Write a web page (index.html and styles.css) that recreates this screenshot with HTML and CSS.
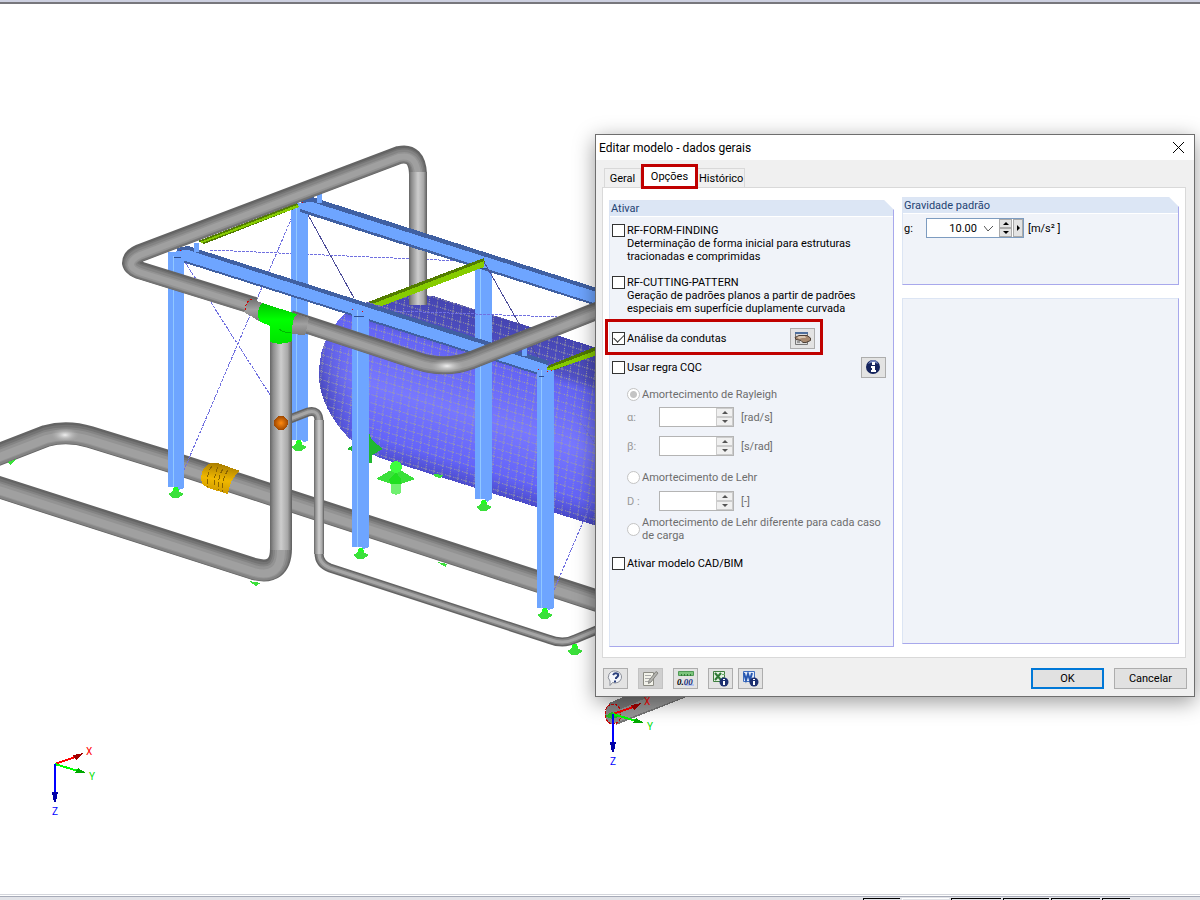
FILE: index.html
```html
<!DOCTYPE html>
<html lang="pt">
<head>
    <meta charset="UTF-8">
    <title>Editar modelo - dados gerais</title>
    <link rel="stylesheet" href="styles.css">
</head>
<body>
<div class="toolbar-edge"></div>
<main class="workspace">
    <svg class="scene" viewBox="0 4 1200 890" preserveAspectRatio="xMinYMin slice" aria-hidden="true">
        <defs>
            <path id="loop-back" d="M418 174Q417 151 399 155L140 253Q131 257 131 263Q132 268 142 271L255 306"/>
            <path id="loop-front" d="M290 319L418 361Q445 370 472 360L604 308"/>
            <path id="pipe-long" d="M-8 457L46 436Q67 430 90 437L168 461L604 603"/>
            <path id="pipe-low" d="M-8 485L254 569Q281 576 281 548V335"/>
            <path id="pipe-small" d="M290 419L308 412Q319 409 319 422V553Q319 564 330 568L548 639Q563 645 575 639L604 627"/>
            <path id="tank" d="M600 349L433 296Q385 290 350 310Q320 332 319 372Q318 400 340 428Q355 448 383 459L600 527Z"/>
            <linearGradient id="tube">
                <stop offset="0" stop-color="#666"/>
                <stop offset=".15" stop-color="#8e8e8e"/>
                <stop offset=".5" stop-color="#cdcdcd"/>
                <stop offset=".8" stop-color="#a8a8a8"/>
                <stop offset="1" stop-color="#5c5c5c"/>
            </linearGradient>
            <linearGradient id="tee" x2="0" y2="1">
                <stop offset="0" stop-color="#00c400"/>
                <stop offset=".4" stop-color="#00ff00"/>
                <stop offset="1" stop-color="#00e400"/>
            </linearGradient>
            <linearGradient id="reducer" x2="0" y2="1">
                <stop offset="0" stop-color="#6c6c6c"/>
                <stop offset=".5" stop-color="#a0a0a0"/>
                <stop offset="1" stop-color="#7c7c7c"/>
            </linearGradient>
            <linearGradient id="bellows" x1=".4" y1="0" x2=".2" y2="1">
                <stop offset="0" stop-color="#a87c00"/>
                <stop offset=".5" stop-color="#f0b800"/>
                <stop offset="1" stop-color="#c89400"/>
            </linearGradient>
            <linearGradient id="tank-fill" gradientUnits="userSpaceOnUse" x1="475" y1="307" x2="425" y2="474">
                <stop offset="0" stop-color="#4444b0"/>
                <stop offset=".22" stop-color="#5050c4"/>
                <stop offset=".28" stop-color="#6464f4"/>
                <stop offset=".6" stop-color="#7878ff"/>
                <stop offset=".88" stop-color="#6464f8"/>
                <stop offset="1" stop-color="#4a4ac8"/>
            </linearGradient>
            <linearGradient id="tank-cap" gradientUnits="userSpaceOnUse" x1="318" y1="380" x2="365" y2="368">
                <stop offset="0" stop-color="#3c3ca8" stop-opacity=".75"/>
                <stop offset="1" stop-color="#6a6aff" stop-opacity="0"/>
            </linearGradient>
            <radialGradient id="ball">
                <stop offset="0" stop-color="#ff8a10"/>
                <stop offset="1" stop-color="#a04800"/>
            </radialGradient>
            <radialGradient id="shine">
                <stop offset="0" stop-color="#f0f0f0"/>
                <stop offset="1" stop-color="#b0b0b0" stop-opacity="0"/>
            </radialGradient>
            <pattern id="mesh" width="8" height="8" patternUnits="userSpaceOnUse" patternTransform="matrix(1 .3 -.12 1 0 0)">
                <path class="mesh-line" d="M0 1H8M1 0V8"/>
            </pattern>
            <g id="support">
                <path fill="#1fff1f" d="M-2 -6H2L4 0H-4Z"/>
                <path fill="#3be03b" d="M0 -3L8 1L2 5H-3L-8 1Z"/>
            </g>
            <g id="axes">
                <path stroke="#f00" stroke-width="2" d="M0 0L20 -7"/>
                <path fill="#a00000" d="M18 -9L29 -11L21 -4Z"/>
                <path stroke="#0f0" stroke-width="2" d="M0 0L23 7"/>
                <path fill="#00a800" d="M23 4L31 9L20 9Z"/>
                <path stroke="#00f" stroke-width="2" d="M0 0V30"/>
                <path fill="#0000a8" d="M-3 28H3L1 38H-1Z"/>
                <text class="axis-name" x="31" y="-9" fill="#f00">X</text>
                <text class="axis-name" x="34" y="16" fill="#00e000">Y</text>
                <text class="axis-name" x="-3" y="51" fill="#00f">Z</text>
            </g>
        </defs>

        <!-- rear pipe run -->
        <g class="pipe pipe-large">
            <use href="#pipe-long" class="tone-1"/>
            <use href="#pipe-long" class="tone-2"/>
            <use href="#pipe-long" class="tone-3"/>
            <use href="#pipe-long" class="tone-4"/>
            <use href="#pipe-long" class="tone-5"/>
        </g>
        <ellipse cx="65" cy="435" rx="14" ry="7" fill="url(#shine)"/>
        <path fill="url(#bellows)" d="M206 466Q210 462 218 463L240 471Q230 478 228 494L208 488Q200 484 201 477Q202 470 206 466Z"/>
        <path class="ribs" d="M212 466Q206 474 208 487M218 467Q213 477 215 488M223 469Q217 478 219 490M228 470Q221 481 223 492"/>

        <!-- tank -->
        <use href="#tank" fill="url(#tank-fill)"/>
        <use href="#tank" fill="url(#tank-cap)"/>
        <use href="#tank" fill="url(#mesh)"/>

        <!-- rear frame -->
        <g class="brace">
            <path d="M295 210L184 470M185 262L299 440M210 250L484 262"/>
            <path class="dark" d="M302 204L354 298"/>
        </g>
        <rect x="409" y="172" width="18" height="133" fill="url(#tube)"/>
        <g class="column">
            <path d="M291 203H308V441L303 442L301 440H291Z"/>
            <path class="gloss" d="M296 207V440"/>
            <path d="M475 265H492V499L487 502L485 499H475Z"/>
            <path class="gloss" d="M480 268V499"/>
        </g>
        <g class="beam">
            <path class="edge" d="M301 200L312 197L600 289V307L300 212Z"/>
            <path d="M300 203L312 202L600 293V305L300 209Z"/>
            <path d="M317 193H322V203H317Z"/>
        </g>
        <g class="green-beam">
            <path class="edge" d="M198 241L297 203L299 207L204 244Z"/>
            <path d="M200 242L297 205L299 207L202 243Z"/>
            <path class="edge" d="M368 302L484 258L485 264L382 306Z"/>
            <path d="M372 304L484 261V267L382 306Z"/>
            <path class="edge" d="M545 367L600 345V353L552 371Z"/>
            <path d="M546 369L600 349V354L550 371Z"/>
        </g>
        <g class="brace">
            <path d="M395 311L557 317M555 383L598 448M554 590L600 482"/>
            <path class="dark" d="M484 262L538 357"/>
        </g>

        <!-- front frame -->
        <g class="beam">
            <path class="edge" d="M177 248L188 246L549 361L545 377L176 260Z"/>
            <path d="M176 251L188 250L548 365L545 375L176 258Z"/>
            <path d="M194 243H199V252H194ZM522 347H527V356H522Z"/>
        </g>
        <g class="column">
            <path d="M168 252H184V488L179 490L176 487H168Z"/>
            <path class="gloss" d="M173 256V487"/>
            <path d="M352 310H369V547L364 549L361 547H352Z"/>
            <path class="gloss" d="M357 310V547"/>
            <path d="M537 370H554V608L549 610L546 608H537Z"/>
            <path class="gloss" d="M541 370V608"/>
        </g>
        <path stroke="#2f4f8f" d="M174 257H181M354 316H364M539 376H544M480 268H487"/>
        <path fill="#e00000" d="M180 250h1v1h-1zM302 202h1v1h-1zM352 309h1v1h-1zM362 311h1v1h-1zM538 369h1v1h-1zM547 371h1v1h-1zM551 370h1v1h-1z"/>

        <!-- upper loop -->
        <g class="pipe pipe-medium">
            <use href="#loop-back" class="tone-1"/>
            <use href="#loop-back" class="tone-2"/>
            <use href="#loop-back" class="tone-3"/>
            <use href="#loop-back" class="tone-4"/>
            <use href="#loop-back" class="tone-5"/>
            <use href="#loop-front" class="tone-1"/>
            <use href="#loop-front" class="tone-2"/>
            <use href="#loop-front" class="tone-3"/>
            <use href="#loop-front" class="tone-4"/>
            <use href="#loop-front" class="tone-5"/>
        </g>
        <rect x="409" y="172" width="18" height="24" fill="url(#tube)"/>
        <ellipse cx="447" cy="366" rx="17" ry="7" fill="url(#shine)"/>
        <path fill="url(#reducer)" d="M249 298L262 303L259 321L244 312Z"/>
        <path fill="url(#reducer)" d="M294 313L309 318L305 335L290 334Z"/>
        <path class="weld" d="M245 310Q245 302 252 299"/>

        <!-- lower run and riser -->
        <g class="pipe pipe-large">
            <use href="#pipe-low" class="tone-1"/>
            <use href="#pipe-low" class="tone-2"/>
            <use href="#pipe-low" class="tone-3"/>
            <use href="#pipe-low" class="tone-4"/>
            <use href="#pipe-low" class="tone-5"/>
        </g>
        <rect x="270" y="340" width="22" height="210" fill="url(#tube)"/>
        <g class="pipe pipe-thin">
            <use href="#pipe-small" class="tone-1"/>
            <use href="#pipe-small" class="tone-2"/>
            <use href="#pipe-small" class="tone-3"/>
        </g>
        <rect x="314" y="420" width="10" height="134" fill="url(#tube)"/>
        <rect x="270" y="400" width="22" height="40" fill="url(#tube)"/>
        <path fill="url(#tee)" d="M262 303L297 314Q291 319 292 341Q281 346 270 342V326L259 321Q256 310 262 303Z"/>
        <path fill="none" stroke="#00b800" d="M279 329Q285 334 291 332"/>
        <circle cx="281" cy="423" r="7" fill="url(#ball)"/>

        <!-- supports -->
        <use href="#support" x="176" y="493"/>
        <use href="#support" x="299" y="446"/>
        <use href="#support" x="361" y="554"/>
        <use href="#support" x="484" y="506"/>
        <use href="#support" x="545" y="614"/>
        <use href="#support" x="575" y="650"/>
        <path fill="#20b830" d="M369 433L372 440L383 449L372 455V463H369ZM347 449L352 446V451Z"/>
        <path fill="#3be03b" d="M376 479L389 471H402L415 479L401 484H391Z"/>
        <circle cx="396" cy="467" r="6" fill="#3dff3d"/>
        <path fill="#20e020" d="M389 480L396 472L401 479V484H391Z"/>
        <path fill="#70f070" d="M391 484H401V493L396 495L391 493Z"/>
        <path fill="#3be03b" d="M434 474L443 475L440 478L435 477ZM437 562L447 564L446 567ZM7 462L16 459L11 465ZM249 581L261 583L256 586Z"/>

        <!-- pipe end under the dialog -->
        <path fill="#777" d="M609 703L640 690H700L684 698L616 725Z"/>
        <path fill="#969696" d="M614 712L660 692L684 697L618 722Z"/>
        <ellipse class="pipe-end" cx="613" cy="714" rx="8" ry="10"/>
        <path fill="#20c020" d="M605 716L612 712L622 716L612 719Z"/>

        <use href="#axes" x="55" y="764"/>
        <use href="#axes" x="613" y="714"/>
    </svg>

    <section class="dialog" role="dialog" aria-labelledby="dialog-title">
        <header class="dialog-title">
            <h1 id="dialog-title">Editar modelo - dados gerais</h1>
            <button class="close" type="button" aria-label="Fechar">
                <svg width="11" height="11" viewBox="0 0 11 11"><path d="M0 0L11 11M11 0L0 11" stroke="#000"/></svg>
            </button>
        </header>

        <nav class="tabs">
            <button class="tab" type="button">Geral</button>
            <button class="tab tab-active" type="button">Opções</button>
            <button class="tab" type="button">Histórico</button>
        </nav>

        <div class="pane">
            <section class="group group-left">
                <h2>Ativar</h2>
                <div class="group-body">
                    <label class="option">
                        <input type="checkbox">
                        <span>RF-FORM-FINDING<br>Determinação de forma inicial para estruturas<br>tracionadas e comprimidas</span>
                    </label>
                    <label class="option">
                        <input type="checkbox">
                        <span>RF-CUTTING-PATTERN<br>Geração de padrões planos a partir de padrões<br>especiais em superfície duplamente curvada</span>
                    </label>
                    <div class="option-row highlighted">
                        <label class="option"><input type="checkbox" checked><span>Análise da condutas</span></label>
                        <button class="icon-button" type="button" aria-label="Configurar">
                            <svg width="17" height="15" viewBox="0 0 17 15">
                                <path fill="#dcdcdc" stroke="#777" d="M1.500 1.500h12v12h-12z"/>
                                <path fill="#4f6f9c" d="M1 1h13v2H1z"/>
                                <path fill="#999" d="M3 10h3v2H3zM8 11h4v1H8z"/>
                                <path fill="#a88a70" stroke="#4e4036" d="M1 6.500L5 4.500H13L16.500 7V9.500L12 11.500H9L7 9.500L2 8.500Z"/>
                                <path fill="#d8c4ae" d="M3 6L6 5H11L12 7H8L5 8Z"/>
                            </svg>
                        </button>
                    </div>
                    <div class="option-row cqc">
                        <label class="option"><input type="checkbox"><span>Usar regra CQC</span></label>
                        <button class="icon-button" type="button" aria-label="Informação">
                            <svg width="17" height="17" viewBox="0 0 17 17">
                                <circle cx="8" cy="8" r="7" fill="#14235c"/>
                                <path fill="#6f80b8" d="M3 5Q5 1 8 1Q12 1 13 5Q8 2 3 5Z"/>
                                <path fill="#fff" d="M7 3h3v3H7zM6 7h4v4h1v2H6v-2h1V9H6z"/>
                            </svg>
                        </button>
                    </div>

                    <fieldset class="damping" disabled>
                        <label class="option"><input type="radio" name="damping" checked><span>Amortecimento de Rayleigh</span></label>
                        <div class="field field-alpha">
                            <label for="alpha">α:</label>
                            <span class="spin"><input type="text" id="alpha"><span class="steps"><button type="button" class="up" aria-label="Mais"></button><button type="button" class="down" aria-label="Menos"></button></span></span>
                            <span class="unit">[rad/s]</span>
                        </div>
                        <div class="field field-beta">
                            <label for="beta">β:</label>
                            <span class="spin"><input type="text" id="beta"><span class="steps"><button type="button" class="up" aria-label="Mais"></button><button type="button" class="down" aria-label="Menos"></button></span></span>
                            <span class="unit">[s/rad]</span>
                        </div>
                        <label class="option lehr"><input type="radio" name="damping"><span>Amortecimento de Lehr</span></label>
                        <div class="field field-d">
                            <label for="lehr-d">D :</label>
                            <span class="spin"><input type="text" id="lehr-d"><span class="steps"><button type="button" class="up" aria-label="Mais"></button><button type="button" class="down" aria-label="Menos"></button></span></span>
                            <span class="unit">[-]</span>
                        </div>
                        <label class="option lehr-case"><input type="radio" name="damping"><span>Amortecimento de Lehr diferente para cada caso<br>de carga</span></label>
                    </fieldset>

                    <label class="option"><input type="checkbox"><span>Ativar modelo CAD/BIM</span></label>
                </div>
            </section>

            <div class="right-column">
                <section class="group gravity">
                    <h2>Gravidade padrão</h2>
                    <div class="gravity-row">
                        <label for="gravity">g:</label>
                        <span class="spin combo">
                            <input type="text" id="gravity" value="10.00">
                            <button type="button" class="drop" aria-label="Lista"><svg width="9" height="6" viewBox="0 0 9 6"><path d="M0 0L4 5L9 0" fill="none" stroke="#555"/></svg></button>
                            <span class="steps"><button type="button" class="up" aria-label="Mais"></button><button type="button" class="down" aria-label="Menos"></button></span>
                            <button type="button" class="next" aria-label="Seguinte"></button>
                        </span>
                        <span class="unit">[m/s² ]</span>
                    </div>
                </section>
                <section class="group blank"></section>
            </div>
        </div>

        <footer class="dialog-footer">
            <button class="icon-button" type="button" aria-label="Ajuda">
                <svg width="17" height="17" viewBox="0 0 17 17">
                    <path fill="#f4f6fb" stroke="#8b8f98" d="M8.500 1a6.500 6 0 1 1-3 11.500L3 15.500V11A6.500 6 0 0 1 8.500 1Z"/>
                    <path fill="none" stroke="#2a3f7c" stroke-width="2" d="M6 5Q8 2 11 4Q12 6 9 8V9M8 10.500V12.500"/>
                </svg>
            </button>
            <button class="icon-button pressed" type="button" aria-label="Comentário">
                <svg width="17" height="17" viewBox="0 0 17 17">
                    <path fill="#f2f2ea" stroke="#8c8c84" d="M1.500 2.500h10v13h-10z"/>
                    <path stroke="#aaa" d="M3 5.500h6M3 8.500h5M3 11.500h4"/>
                    <path fill="#b4b4b0" stroke="#84847f" d="M14 1.500L16 3L9 12L6.500 13.500L7 10.500Z"/>
                </svg>
            </button>
            <button class="icon-button" type="button" aria-label="Unidades e casas decimais">
                <svg width="18" height="17" viewBox="0 0 18 17">
                    <path fill="#7cc47c" stroke="#4f9a55" d="M1.500 1.500h15v4h-15z"/>
                    <path stroke="#2f7a35" d="M4.500 4v2M7.500 4v2M10.500 4v2M13.500 4v2"/>
                    <path fill="#b9c6ee" d="M8 14h9v2H8z"/>
                    <text class="decimals" x="0" y="15">0.<tspan fill="#203080">00</tspan></text>
                </svg>
            </button>
            <button class="icon-button" type="button" aria-label="Exportar para Excel">
                <svg width="17" height="17" viewBox="0 0 17 17">
                    <path fill="#e4f1e2" stroke="#3f7f3f" d="M1.500 1.500h11v10h-11z"/>
                    <path stroke="#2f7a35" stroke-width="2" d="M3 3L9 10M9 3L3 10"/>
                    <path stroke="#6aa86a" d="M10 4.500h3M10 7.500h3"/>
                    <circle cx="12" cy="12" r="4.500" fill="#1c2f70"/>
                    <path fill="#fff" d="M11 9h2v1h-2zM11 11h2v4h-2z"/>
                </svg>
            </button>
            <button class="icon-button word" type="button" aria-label="Exportar para Word">
                <svg width="17" height="17" viewBox="0 0 17 17">
                    <path fill="#e2ebfa" stroke="#3f6fc0" d="M1.500 1.500h11v10h-11z"/>
                    <path fill="none" stroke="#2757b0" stroke-width="2" d="M2 3L4 10L6 4L8 10L10 3"/>
                    <circle cx="12" cy="12" r="4.500" fill="#1c2f70"/>
                    <path fill="#fff" d="M11 9h2v1h-2zM11 11h2v4h-2z"/>
                </svg>
            </button>
            <button class="push push-default" type="button">OK</button>
            <button class="push" type="button">Cancelar</button>
        </footer>
    </section>
</main>
<div class="status-bar">
    <span class="cell cell-1"></span>
    <span class="cell cell-2"></span>
    <span class="cell cell-3"></span>
    <span class="cell cell-4"></span>
    <span class="cell cell-5"></span>
    <span class="cell cell-6"></span>
</div>
</body>
</html>
```

FILE: styles.css
```css
* {
    margin: 0;
    padding: 0;
    box-sizing: border-box;
}

body {
    display: flex;
    flex-direction: column;
    height: 100vh;
    overflow: hidden;
    background: #fff;
    font: 11px/13px Tahoma, Roboto, sans-serif;
    color: #000;
}

button, input {
    font: inherit;
    color: inherit;
}

.toolbar-edge {
    height: 4px;
    background: #cdd0e0;
    border-bottom: 2px solid #77777c;
}

.workspace {
    position: relative;
    flex: 1;
    min-height: 0;
}

.status-bar {
    display: flex;
    justify-content: flex-end;
    gap: 2px;
    height: 6px;
    padding: 1px 70px 0 0;
    border-top: 1px solid #d4d6dc;
    background: linear-gradient(#fff 1px, #a7abb8 1px, #a7abb8 2px, #e2e3e8 2px);
}

.cell {
    margin-top: 2px;
    border-top: 1px solid #000;
    border-left: 1px solid #000;
}

.cell-1 { width: 37px; }
.cell-2 { width: 47px; border-color: #fff; }
.cell-3 { width: 50px; }
.cell-4 { width: 46px; }
.cell-5 { width: 49px; }
.cell-6 { width: 28px; }

/* model view */
.scene {
    display: block;
    width: 100%;
    height: 100%;
    shape-rendering: crispEdges;
}

.pipe {
    fill: none;
    shape-rendering: auto;
}

.tone-1 { stroke: #646464; }
.tone-2 { stroke: #747474; }
.tone-3 { stroke: #848484; }
.tone-4 { stroke: #939393; }
.tone-5 { stroke: #a0a0a0; }

.pipe-large .tone-1 { stroke-width: 22px; }
.pipe-large .tone-2 { stroke-width: 19px; transform: translateY(1px); }
.pipe-large .tone-3 { stroke-width: 16px; transform: translateY(2px); }
.pipe-large .tone-4 { stroke-width: 12px; transform: translateY(2px); }
.pipe-large .tone-5 { stroke-width: 8px; transform: translateY(3px); }

.pipe-medium .tone-1 { stroke-width: 18px; }
.pipe-medium .tone-2 { stroke-width: 15px; transform: translateY(1px); }
.pipe-medium .tone-3 { stroke-width: 12px; transform: translateY(1px); }
.pipe-medium .tone-4 { stroke-width: 9px; transform: translateY(2px); }
.pipe-medium .tone-5 { stroke-width: 6px; transform: translateY(2px); }

.pipe-thin .tone-1 { stroke-width: 9px; }
.pipe-thin .tone-2 { stroke-width: 6px; stroke: #858585; }
.pipe-thin .tone-3 { stroke-width: 3px; stroke: #a6a6a6; }

.beam { fill: #6ea5ff; }
.beam .edge { fill: #4060a2; }
.column { fill: #6ea5ff; }
.column .gloss { stroke: #92c8ff; }
.green-beam { fill: #86cc00; }
.green-beam .edge { fill: #527c00; }

.brace {
    fill: none;
    stroke: #7070e0;
    stroke-dasharray: 3 1;
}

.brace .dark {
    stroke: #4c4c98;
    stroke-dasharray: none;
}

.mesh-line {
    fill: none;
    stroke: #a4a49c;
    stroke-dasharray: 1 1;
}

.ribs {
    fill: none;
    stroke: #8a6400;
    stroke-dasharray: 5 2;
}

.weld {
    fill: none;
    stroke: #d00000;
    stroke-dasharray: 2 2;
}

.pipe-end {
    fill: #888;
    stroke: #d00000;
    stroke-dasharray: 3 1;
}

.axis-name {
    font: 10px Roboto, sans-serif;
}

/* dialog */
.dialog {
    position: absolute;
    top: 130px;
    right: 5px;
    width: 50%;
    min-width: 560px;
    background: #f0f0f0;
    border: 1px solid #6e6e6e;
    box-shadow: 0 5px 20px rgba(0, 0, 0, .4);
}

.dialog-title {
    display: flex;
    align-items: center;
    justify-content: space-between;
    height: 25px;
    padding: 0 10px 0 3px;
    background: #fff;
}

.dialog-title h1 {
    font: 12px/16px "Segoe UI", Roboto, sans-serif;
}

.close {
    width: 11px;
    height: 11px;
    border: 0;
    background: none;
}

.close svg {
    display: block;
}

.tabs {
    display: flex;
    align-items: flex-end;
    padding: 4px 0 0 8px;
}

.tab {
    height: 19px;
    min-width: 37px;
    padding: 0 4px;
    border: 1px solid #d9d9d9;
    border-bottom: 0;
    background: #f0f0f0;
}

.tab:last-child {
    padding: 0 1px;
    border-left: 0;
}

.tab-active {
    position: relative;
    height: 25px;
    min-width: 57px;
    margin-bottom: -2px;
    border: 3px solid #c00000;
    background: #fff;
}

.pane {
    display: grid;
    grid-template-columns: 285fr 277fr;
    gap: 8px;
    margin: 0 8px 0 6px;
    padding: 9px 6px 10px;
    border: 1px solid #d9d9d9;
    background: #fff;
}

.group {
    border: 1px solid #dce5f4;
    border-right-color: #a8a8ec;
    border-bottom-color: #a8a8ec;
    background: #f0f3f9;
}

.group h2 {
    height: 16px;
    padding: 0 1px;
    border-bottom: 1px solid #fff;
    background: #dce6f5;
    font-size: 11px;
    font-weight: normal;
    line-height: 15px;
    color: #1f4373;
}

.gravity {
    min-height: 88px;
    clip-path: polygon(0 0, calc(100% - 10px) 0, 100% 10px, 100% 100%, 0 100%);
}

/* the red frame reaches past the left edge of the group */
.group-left {
    margin-top: 3px;
    clip-path: polygon(-10px 0, calc(100% - 10px) 0, 100% 10px, 100% 100%, -10px 100%);
}

.group-body {
    display: flex;
    flex-direction: column;
    gap: 13px;
    padding: 7px 7px 76px 2px;
}

.option {
    display: flex;
    align-items: flex-start;
    gap: 2px;
}

input[type="checkbox"], input[type="radio"] {
    flex: none;
    appearance: none;
    width: 13px;
    height: 13px;
    border: 1px solid #333;
    background: #fff;
}

input[type="checkbox"]:checked {
    display: grid;
    place-items: center;
}

input[type="checkbox"]:checked::before {
    content: "";
    width: 9px;
    height: 5px;
    margin-bottom: 3px;
    border: solid #333;
    border-width: 0 0 1px 1px;
    transform: rotate(-45deg);
}

input[type="radio"] {
    border-color: #c4c4c4;
    border-radius: 50%;
}

input[type="radio"]:checked {
    background: radial-gradient(circle, #c4c4c4 3px, #fff 4px);
}

.option-row {
    display: flex;
    align-items: center;
    justify-content: space-between;
}

.highlighted {
    position: relative;
    width: 74%;
}

.highlighted::after {
    content: "";
    position: absolute;
    inset: -9px -8px -6px -7px;
    border: 3px solid #c00000;
    pointer-events: none;
}

.cqc {
    margin-top: -5px;
}

.icon-button {
    display: grid;
    place-items: center;
    width: 25px;
    height: 21px;
    border: 1px solid #adadad;
    background: #e3e3e3;
}

.icon-button svg {
    display: block;
}

.pressed {
    background: #cfcfcf;
    border-color: #c2c2c2;
}

.damping {
    margin: -3px 0 2px;
    padding-left: 15px;
    border: 0;
    color: #6d6d6d;
}

.field {
    display: grid;
    grid-template-columns: 32px 75px auto;
    align-items: center;
}

.field label {
    color: #999;
}

.unit {
    padding-left: 7px;
}

.field-alpha { margin-top: 6px; }
.field-beta { margin-top: 9px; }
.lehr { margin-top: 15px; }
.field-d { margin-top: 7px; }

.lehr-case {
    align-items: center;
    margin-top: 5px;
}

.spin {
    display: flex;
    height: 20px;
    border: 1px solid #b4b4b4;
    background: #fff;
}

.spin input {
    flex: 1;
    min-width: 0;
    border: 0;
    background: none;
    text-align: right;
}

.steps {
    display: flex;
    flex-direction: column;
    width: 17px;
}

.steps button, .next {
    display: grid;
    place-items: center;
    flex: 1;
    border: 1px solid #ccc;
    background: #f0f0f0;
}

.steps button::before {
    content: "";
    border: 3px solid transparent;
    border-top-width: 0;
    border-bottom-color: #555;
}

.steps .down::before {
    border-top: 3px solid #555;
    border-bottom: 0;
}

.gravity-row {
    display: flex;
    align-items: center;
    padding: 4px 1px;
}

.gravity-row label {
    width: 22px;
}

.gravity-row .unit {
    padding-left: 4px;
}

.combo {
    width: 98px;
    border-color: #7d9cc0;
}

.combo .drop {
    width: 22px;
    border: 0;
    background: none;
}

.combo .steps {
    width: 13px;
}

.combo .steps button, .combo .next {
    border-color: #aaa;
    background: #e3e3e3;
}

.combo .steps button::before {
    border-bottom-color: #000;
}

.combo .steps .down::before {
    border-top-color: #000;
}

.combo .next {
    flex: none;
    width: 10px;
    margin-left: 1px;
}

.combo .next::before {
    content: "";
    border: 3px solid transparent;
    border-left-color: #000;
    border-right: 0;
}

.right-column {
    display: flex;
    flex-direction: column;
    gap: 13px;
    margin-bottom: 3px;
}

.blank {
    flex: 1;
}

.dialog-footer {
    display: flex;
    gap: 10px;
    padding: 10px 7px 7px;
}

.dialog-footer .word {
    margin-left: -5px;
}

.decimals {
    font: italic bold 9px "Liberation Serif", serif;
}

.push {
    width: 73px;
    height: 21px;
    border: 1px solid #adadad;
    background: #e1e1e1;
}

.push-default {
    margin-left: auto;
    border: 2px solid #0078d7;
}
```
